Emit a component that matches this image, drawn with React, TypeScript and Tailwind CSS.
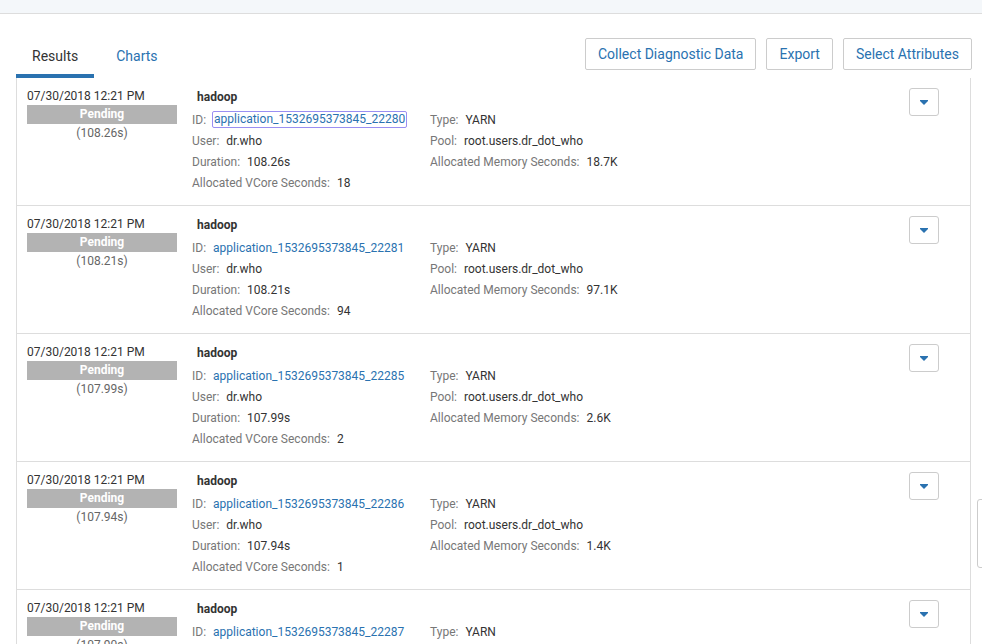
import React from "react";

type Row = {
  dur: string;
  id: string;
  vcore: string;
  mem: string;
  focus?: boolean;
};

const rows: Row[] = [
  { dur: "108.26s", id: "application_1532695373845_22280", vcore: "18", mem: "18.7K", focus: true },
  { dur: "108.21s", id: "application_1532695373845_22281", vcore: "94", mem: "97.1K" },
  { dur: "107.99s", id: "application_1532695373845_22285", vcore: "2", mem: "2.6K" },
  { dur: "107.94s", id: "application_1532695373845_22286", vcore: "1", mem: "1.4K" },
  { dur: "107.90s", id: "application_1532695373845_22287", vcore: "3", mem: "3.2K" },
];

function Field({ label, children }: { label: string; children: React.ReactNode }) {
  return (
    <div className="h-[21px] flex items-center whitespace-nowrap">
      <span className="text-[#777777]">{label}</span>
      <span className="ml-[7px] text-[#333333]">{children}</span>
    </div>
  );
}

function ResultRow({ r }: { r: Row }) {
  return (
    <div className="flex border-b border-[#dddddd] pt-[9px] pb-[12px] pl-[10px] pr-[31px] text-[12px]">
      <div className="w-[150px] flex flex-col shrink-0">
        <div className="h-[18px] leading-[18px] text-[#333333]">07/30/2018 12:21 PM</div>
        <div className="h-[19px] leading-[19px] bg-[#b3b3b3] text-white font-bold text-center">Pending</div>
        <div className="h-[18px] leading-[18px] text-center text-[#666666]">({r.dur})</div>
      </div>
      <div className="ml-[15px] w-[238px] shrink-0">
        <div className="h-[20px] leading-[20px] pl-[5px] font-bold text-[#333333] mb-[2px]">hadoop</div>
        <div className="h-[21px] flex items-center whitespace-nowrap">
          <span className="text-[#777777]">ID:</span>
          {r.focus ? (
            <span className="ml-[6px] text-[#2a72b0] border border-[#9a8ff2] rounded-[2px] px-[1px] leading-[15px]">{r.id}</span>
          ) : (
            <span className="ml-[7px] text-[#2a72b0]">{r.id}</span>
          )}
        </div>
        <Field label="User:">dr.who</Field>
        <Field label="Duration:">{r.dur}</Field>
        <Field label="Allocated VCore Seconds:">{r.vcore}</Field>
      </div>
      <div className="flex-1 pt-[22px]">
        <Field label="Type:">YARN</Field>
        <Field label="Pool:">root.users.dr_dot_who</Field>
        <Field label="Allocated Memory Seconds:">{r.mem}</Field>
      </div>
      <div className="pt-[1px]">
        <button className="w-[30px] h-[28px] border border-[#cccccc] rounded-[3px] bg-white flex items-center justify-center">
          <svg width="8" height="5" viewBox="0 0 8 5">
            <path d="M0 0h8v1l-4 4-4-4z" fill="#2a72b0" />
          </svg>
        </button>
      </div>
    </div>
  );
}

export default function App() {
  return (
    <div
      className="relative w-[982px] h-[644px] overflow-hidden bg-white"
      style={{ fontFamily: "Roboto, 'Liberation Sans', Arial, sans-serif" }}
    >
      <div className="h-[14px] bg-[#f4f7fa] border-b border-[#dddddd]" />
      <div className="pl-[16px] pr-[10px] pt-[24px] flex justify-between items-start">
        <div className="flex h-[40px] text-[14px]">
          <div className="px-[16px] h-[40px] flex items-center border-b-4 border-[#2a72b0] text-[#333333]">
            Results
          </div>
          <div className="pl-[22px] h-[40px] flex items-center text-[#2a72b0] pb-[4px]">Charts</div>
        </div>
        <div className="flex gap-[10px] text-[14px] text-[#2a72b0]">
          <button className="h-[32px] px-[12px] border border-[#cccccc] rounded-[2px] bg-white">Collect Diagnostic Data</button>
          <button className="h-[32px] px-[12px] border border-[#cccccc] rounded-[2px] bg-white">Export</button>
          <button className="h-[32px] px-[12px] border border-[#cccccc] rounded-[2px] bg-white">Select Attributes</button>
        </div>
      </div>
      <div className="ml-[16px] w-[955px] border-l border-r border-[#dddddd]">
        {rows.map((r) => (
          <ResultRow key={r.id} r={r} />
        ))}
      </div>
      <div className="absolute left-[977px] top-[499px] w-[12px] h-[69px] border border-[#cccccc] rounded-l-[3px] bg-white" />
    </div>
  );
}
